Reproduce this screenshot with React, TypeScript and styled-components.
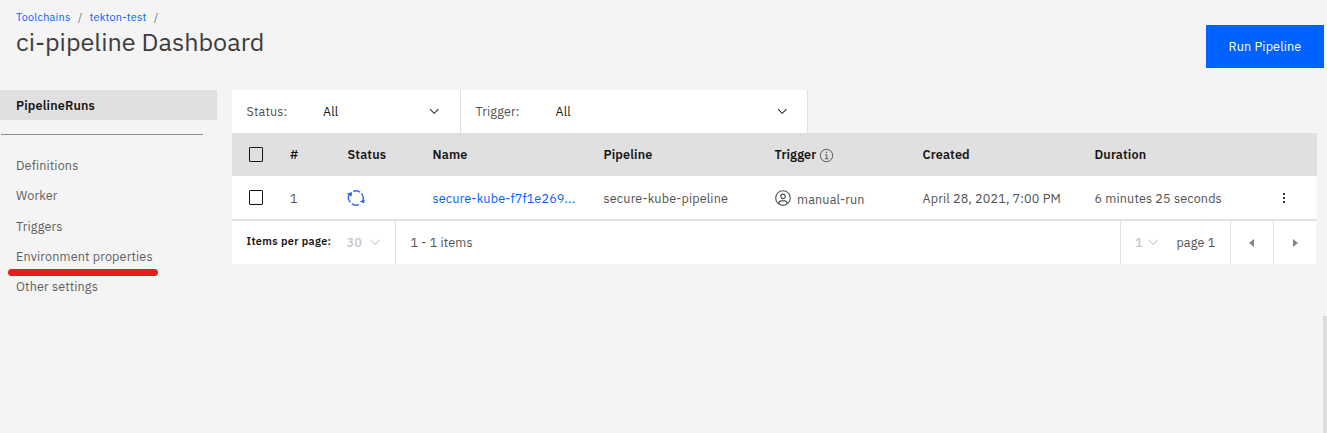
import React from "react";
import styled, { createGlobalStyle } from "styled-components";

const GlobalStyle = createGlobalStyle`
  * { box-sizing: border-box; }
  body {
    margin: 0;
    height: 433px;
    overflow: hidden;
    background: #f4f4f4;
    font-family: "IBM Plex Sans", Roboto, "Liberation Sans", sans-serif;
    font-size: 12.6px;
    color: #525252;
  }
`;

const Label = styled.span<{ $ls?: number }>`
  letter-spacing: ${(p) => p.$ls ?? 0.15}px;
  white-space: nowrap;
`;

const Page = styled.div`
  position: relative;
  height: 433px;
  overflow: hidden;
`;
const Header = styled.header`
  display: flex;
  justify-content: space-between;
  height: 90px;
  padding: 10px 3px 0 16px;
`;
const Crumbs = styled.nav`
  display: flex;
  gap: 7.5px;
  height: 14px;
  line-height: 14px;
  font-size: 10.8px;
  color: #6f6f6f;
  a { color: #0062ff; }
`;
const Title = styled.h1`
  margin: 1px 0 0;
  font-size: 25.2px;
  line-height: 34px;
  font-weight: 400;
  color: #3d3d3d;
`;
const RunButton = styled.button`
  width: 118px;
  height: 43px;
  margin-top: 15px;
  padding: 0 0 2px;
  border: 0;
  background: #0062ff;
  color: #fff;
  font: inherit;
`;
const Body = styled.div`
  display: flex;
`;
const Side = styled.aside`
  width: 217px;
  margin-right: 15px;
`;
const SideItem = styled.div<{ $active?: boolean }>`
  height: 30.2px;
  line-height: 30.2px;
  padding-left: 16px;
  color: ${(p) => (p.$active ? "#161616" : "#5f5f5f")};
  font-weight: ${(p) => (p.$active ? 600 : 400)};
  background: ${(p) => (p.$active ? "#e0e0e0" : "none")};
`;
const Divider = styled.div`
  width: 202px;
  height: 1px;
  margin: 14px 0 15px 1px;
  background: #8d8d8d;
`;
const Underline = styled.div`
  position: absolute;
  left: 8px;
  top: 268.5px;
  width: 150px;
  height: 7px;
  border-radius: 4px;
  background: #e81c1c;
`;
const Main = styled.main`
  width: 1085px;
`;
const Filters = styled.div`
  display: flex;
  width: 576px;
  height: 43px;
  background: #fff;
`;
const Filter = styled.div<{ $width: number; $label: number; $end: number }>`
  display: flex;
  align-items: center;
  width: ${(p) => p.$width}px;
  padding: 0 ${(p) => p.$end}px 0 14.5px;
  border-right: 1px solid #e0e0e0;
  & > span { padding-bottom: 2px; }
  & > :first-child { width: ${(p) => p.$label}px; }
  & > :nth-child(2) { flex: 1; color: #161616; }
`;
const Row = styled.div<{ $head?: boolean }>`
  display: grid;
  grid-template-columns: 41.5px 57.5px 85px 171px 171.5px 147.5px 172px 188px 20px;
  align-items: center;
  height: ${(p) => (p.$head ? 43 : 45)}px;
  padding-left: 16.5px;
  background: ${(p) => (p.$head ? "#e0e0e0" : "#fff")};
  color: ${(p) => (p.$head ? "#161616" : "#525252")};
  font-weight: ${(p) => (p.$head ? 600 : 400)};
  border-bottom: ${(p) => (p.$head ? "0" : "2px solid #e0e0e0")};
  & span { padding-bottom: ${(p) => (p.$head ? 2 : 0)}px; }
`;
const Cell = styled.div<{ $gap?: number; $shift?: number }>`
  display: flex;
  align-items: center;
  gap: ${(p) => p.$gap ?? 0}px;
  margin-left: ${(p) => p.$shift ?? 0}px;
  white-space: nowrap;
`;
const LoweredLabel = styled(Label)`
  padding-top: 2px;
`;
const Box = styled.span`
  width: 14px;
  height: 15px;
  border: 1px solid #161616;
  border-radius: 1px;
`;
const NameLink = styled.a`
  color: #0062ff;
`;
const Pagination = styled.div`
  display: flex;
  width: 1084px;
  height: 43px;
  background: #fff;
  span { padding-bottom: 2px; }
`;
const PageCell = styled.div<{ $width?: number; $pad?: number; $line?: boolean }>`
  display: flex;
  align-items: center;
  ${(p) => (p.$width ? `width: ${p.$width}px;` : "flex: 1;")}
  padding-left: ${(p) => p.$pad ?? 0}px;
  border-left: ${(p) => (p.$line ? "1px solid #e0e0e0" : "0")};
`;
const PerPage = styled.div`
  width: 100px;
  padding-bottom: 4px;
  font-size: 10.8px;
  font-weight: 600;
  color: #161616;
`;
const Muted = styled.span<{ $width: number }>`
  width: ${(p) => p.$width}px;
  color: #c6c6c6;
  font-weight: 500;
`;
const ScrollBar = styled.div`
  position: absolute;
  right: 0;
  top: 316px;
  width: 4px;
  height: 117px;
  background: #dcdcdc;
`;

const Chevron = ({ color = "#161616" }: { color?: string }) => (
  <svg width="14.4" height="14.4" viewBox="0 0 16 16" fill={color}>
    <path d="M8 11L3 6 3.7 5.3 8 9.6 12.3 5.3 13 6z" />
  </svg>
);
const InfoGlyph = styled.svg`
  margin-top: 1px;
`;
const InfoIcon = () => (
  <InfoGlyph width="15" height="15" viewBox="0 0 16 16" fill="none" stroke="#525252">
    <circle cx="8" cy="8" r="6.6" />
    <path d="M6.5 7.2h1.8v4M6.3 11.4h3.6" />
    <circle cx="8" cy="4.7" r=".75" fill="#525252" stroke="none" />
  </InfoGlyph>
);
const UserIcon = () => (
  <svg width="18" height="18" viewBox="0 0 32 32" fill="#525252">
    <path d="M16,8a5,5,0,1,0,5,5A5,5,0,0,0,16,8Zm0,8a3,3,0,1,1,3-3A3,3,0,0,1,16,16Z" />
    <path d="M16,2A14,14,0,1,0,30,16,14,14,0,0,0,16,2ZM10,26.38V25a3,3,0,0,1,3-3h6a3,3,0,0,1,3,3v1.38a11.9,11.9,0,0,1-12,0Zm13.99-1.45A5,5,0,0,0,19,20H13a5,5,0,0,0-4.99,4.93,12,12,0,1,1,15.98,0Z" />
  </svg>
);
const RunningIcon = () => (
  <svg width="18" height="18" viewBox="0 0 18 18" fill="none" stroke="#2a62dc" strokeWidth="1.4">
    <path d="M2.8 4.4A7.2 7.2 0 0 0 3.4 13.4M4.8 14.8A7.2 7.2 0 0 0 12 15.6M6.2 2.4A7.2 7.2 0 0 1 13.2 3.2M14.4 4.4A7.2 7.2 0 0 1 15.4 12.4" />
    <path d="M-0.2 4.9L4.9 3.1 4.7 7.4zM12.6 12.6L17.8 10.8 17 14.2z" fill="#2a62dc" stroke="none" />
  </svg>
);
const Caret = ({ right }: { right?: boolean }) => (
  <svg width="5" height="8" viewBox="0 0 5 8" fill="#858585">
    <path d={right ? "M0 0L5 4 0 8z" : "M5 0L0 4 5 8z"} />
  </svg>
);
const Dots = () => (
  <svg width="2" height="10" viewBox="0 0 2 10" fill="#333">
    <path d="M0 0h2v2H0zM0 4h2v2H0zM0 8h2v2H0z" />
  </svg>
);

export default function App() {
  return (
    <Page>
      <GlobalStyle />
      <Header>
        <div>
          <Crumbs>
            <a><Label $ls={0.25}>Toolchains</Label></a>
            <span>/</span>
            <a><Label $ls={0.25}>tekton-test</Label></a>
            <span>/</span>
          </Crumbs>
          <Title><Label $ls={0}>ci-pipeline Dashboard</Label></Title>
        </div>
        <RunButton><Label>Run Pipeline</Label></RunButton>
      </Header>
      <Body>
        <Side>
          <SideItem $active><Label>PipelineRuns</Label></SideItem>
          <Divider />
          <SideItem><Label>Definitions</Label></SideItem>
          <SideItem><Label>Worker</Label></SideItem>
          <SideItem><Label>Triggers</Label></SideItem>
          <SideItem><Label>Environment properties</Label></SideItem>
          <SideItem><Label>Other settings</Label></SideItem>
        </Side>
        <Main>
          <Filters>
            <Filter $width={229} $label={76.5} $end={19}>
              <Label>Status:</Label><Label>All</Label><Chevron />
            </Filter>
            <Filter $width={347} $label={80} $end={18}>
              <Label>Trigger:</Label><Label>All</Label><Chevron />
            </Filter>
          </Filters>
          <Row $head>
            <Cell><Box /></Cell>
            <Cell><Label>#</Label></Cell>
            <Cell><Label>Status</Label></Cell>
            <Cell><Label>Name</Label></Cell>
            <Cell><Label>Pipeline</Label></Cell>
            <Cell $gap={2.5} $shift={-0.5}><Label>Trigger</Label><InfoIcon /></Cell>
            <Cell><Label>Created</Label></Cell>
            <Cell><Label>Duration</Label></Cell>
          </Row>
          <Row>
            <Cell><Box /></Cell>
            <Cell><Label>1</Label></Cell>
            <Cell $shift={-0.5}><RunningIcon /></Cell>
            <Cell><NameLink><Label>secure-kube-f7f1e269...</Label></NameLink></Cell>
            <Cell><Label>secure-kube-pipeline</Label></Cell>
            <Cell $gap={5} $shift={-1}><UserIcon /><LoweredLabel>manual-run</LoweredLabel></Cell>
            <Cell><Label>April 28, 2021, 7:00 PM</Label></Cell>
            <Cell><Label>6 minutes 25 seconds</Label></Cell>
            <Cell><Dots /></Cell>
          </Row>
          <Pagination>
            <PageCell $width={163} $pad={14.5}>
              <PerPage><Label $ls={0.38}>Items per page:</Label></PerPage>
              <Muted $width={21}><Label>30</Label></Muted>
              <Chevron color="#c6c6c6" />
            </PageCell>
            <PageCell $pad={14.5} $line><Label>1 - 1 items</Label></PageCell>
            <PageCell $width={110} $pad={14} $line>
              <Muted $width={11}><Label>1</Label></Muted>
              <Chevron color="#c6c6c6" />
              <PageCell $pad={16}><Label>page 1</Label></PageCell>
            </PageCell>
            <PageCell $width={43} $pad={18} $line><Caret /></PageCell>
            <PageCell $width={43} $pad={19} $line><Caret right /></PageCell>
          </Pagination>
        </Main>
      </Body>
      <Underline />
      <ScrollBar />
    </Page>
  );
}
